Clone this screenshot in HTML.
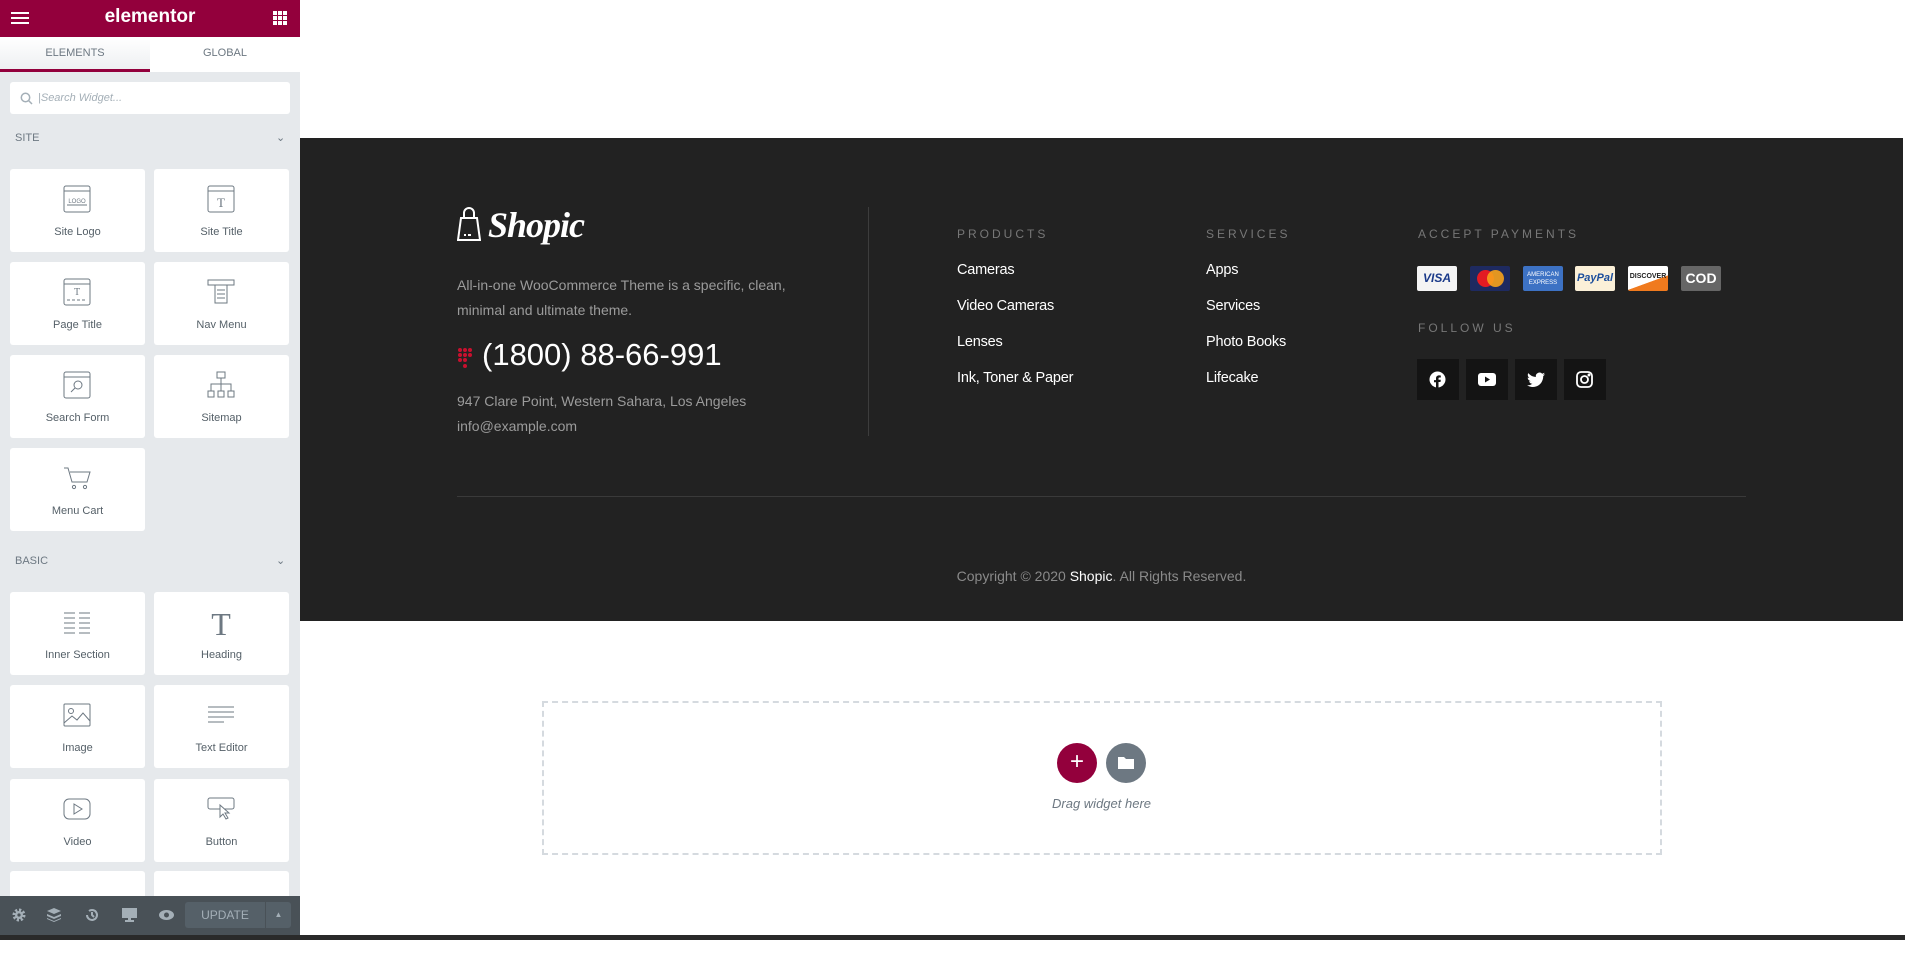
<!DOCTYPE html>
<html><head><meta charset="utf-8"><style>
*{box-sizing:border-box;margin:0;padding:0}
body{width:1905px;height:940px;overflow:hidden;background:#fff;font-family:"Liberation Sans",sans-serif;position:relative}
.abs{position:absolute}
#panel{left:0;top:0;width:300px;height:940px;background:#e6e9ec}
#hdr{left:0;top:0;width:300px;height:37px;background:#93003c;color:#fff}
.tab{top:37px;height:35px;width:150px;font-size:11px;color:#6d7882;text-align:center;line-height:33px;background:#fff}
.tile{width:135px;height:83px;background:#fff;border-radius:3px}
.tile svg{position:absolute;left:53px;top:16px}
.tile span{position:absolute;left:0;right:0;top:57px;text-align:center;font-size:11px;color:#556068}
.sec{font-size:11px;color:#6d7882;left:15px}
.chev{font-size:11px;color:#6d7882;left:276px}
#footer{left:300px;top:138px;width:1603px;height:483px;background:#222}
.h{font-size:12px;letter-spacing:3px;color:#777}
.lk{font-size:14.5px;color:#fff;letter-spacing:-0.2px}
.card{width:40px;height:25px;top:266px;border-radius:2px}
.soc{width:42px;height:41px;top:359px;background:#141414}
.soc svg{position:absolute;left:12px;top:12px}
</style></head><body>
<div id="panel" class="abs">
<div id="hdr" class="abs">
 <div class="abs" style="left:11px;top:12px;width:18px;height:2px;background:#fff;box-shadow:0 5px 0 #fff,0 10px 0 #fff"></div>
 <div class="abs" style="left:0;width:300px;top:6px;text-align:center;font-weight:bold;font-size:19px">elementor</div>
 <svg class="abs" style="left:273px;top:11px" width="14" height="14"><g fill="#fff"><rect x="0" y="0" width="4" height="4"/><rect x="5" y="0" width="4" height="4"/><rect x="10" y="0" width="4" height="4"/><rect x="0" y="5" width="4" height="4"/><rect x="5" y="5" width="4" height="4"/><rect x="10" y="5" width="4" height="4"/><rect x="0" y="10" width="4" height="4"/><rect x="5" y="10" width="4" height="4"/><rect x="10" y="10" width="4" height="4"/></g></svg>
</div>
<div class="abs tab" style="left:0;background:linear-gradient(#fff,#eef0f2);border-bottom:3px solid #93003c">ELEMENTS</div>
<div class="abs tab" style="left:150px">GLOBAL</div>
<div class="abs" style="left:10px;top:82px;width:280px;height:32px;background:#fff;border-radius:3px">
 <svg class="abs" style="left:10px;top:10px" width="13" height="13"><circle cx="5.5" cy="5.5" r="4.2" fill="none" stroke="#a4afb7" stroke-width="1.5"/><line x1="8.5" y1="8.5" x2="12" y2="12" stroke="#a4afb7" stroke-width="1.5"/></svg>
 <div class="abs" style="left:28px;top:10px;font-size:11px;font-style:italic;color:#a4afb7">|Search Widget...</div>
</div>
<div class="abs sec" style="top:132px">SITE</div><div class="abs chev" style="top:131px">&#8964;</div>
<div class="abs tile" style="left:10px;top:169px"><svg width="28" height="28"><rect x="1" y="1" width="26" height="26" rx="2" fill="none" stroke="#6d7882"/><line x1="1" y1="6" x2="27" y2="6" stroke="#6d7882"/><text x="14" y="18" font-size="6" text-anchor="middle" fill="#6d7882" font-family="Liberation Sans">LOGO</text><line x1="4" y1="20" x2="24" y2="20" stroke="#6d7882"/></svg><span>Site Logo</span></div>
<div class="abs tile" style="left:154px;top:169px"><svg width="28" height="28"><rect x="1" y="1" width="26" height="26" rx="2" fill="none" stroke="#6d7882"/><line x1="1" y1="6" x2="27" y2="6" stroke="#6d7882"/><text x="14" y="22" font-size="13" text-anchor="middle" fill="#6d7882" font-family="Liberation Serif">T</text></svg><span>Site Title</span></div>
<div class="abs tile" style="left:10px;top:262px"><svg width="28" height="28"><rect x="1" y="1" width="26" height="26" rx="2" fill="none" stroke="#6d7882"/><line x1="1" y1="6" x2="27" y2="6" stroke="#6d7882"/><text x="14" y="17" font-size="10" text-anchor="middle" fill="#6d7882" font-family="Liberation Serif">T</text><line x1="4" y1="22" x2="24" y2="22" stroke="#6d7882" stroke-dasharray="3 2"/></svg><span>Page Title</span></div>
<div class="abs tile" style="left:154px;top:262px"><svg width="28" height="28"><rect x="1" y="2" width="26" height="5" fill="none" stroke="#6d7882"/><rect x="8" y="7" width="12" height="18" fill="none" stroke="#6d7882"/><line x1="10" y1="12" x2="18" y2="12" stroke="#6d7882"/><line x1="10" y1="16" x2="18" y2="16" stroke="#6d7882"/><line x1="10" y1="20" x2="18" y2="20" stroke="#6d7882"/></svg><span>Nav Menu</span></div>
<div class="abs tile" style="left:10px;top:355px"><svg width="28" height="28"><rect x="1" y="1" width="26" height="26" rx="2" fill="none" stroke="#6d7882"/><line x1="1" y1="6" x2="27" y2="6" stroke="#6d7882"/><circle cx="15" cy="14" r="4" fill="none" stroke="#6d7882"/><line x1="12" y1="17" x2="8" y2="21" stroke="#6d7882"/></svg><span>Search Form</span></div>
<div class="abs tile" style="left:154px;top:355px"><svg width="28" height="28" fill="none" stroke="#6d7882"><rect x="10" y="1" width="8" height="6"/><rect x="1" y="20" width="6" height="6"/><rect x="11" y="20" width="6" height="6"/><rect x="21" y="20" width="6" height="6"/><path d="M14 7v6M4 20v-7h20v7M14 13v7"/></svg><span>Sitemap</span></div>
<div class="abs tile" style="left:10px;top:448px"><svg width="28" height="28" fill="none" stroke="#6d7882"><path d="M1 4h4l4 14h15l3-10H7"/><circle cx="11" cy="23" r="1.6"/><circle cx="22" cy="23" r="1.6"/></svg><span>Menu Cart</span></div>
<div class="abs sec" style="top:555px">BASIC</div><div class="abs chev" style="top:554px">&#8964;</div>
<div class="abs tile" style="left:10px;top:592px"><svg width="28" height="28" stroke="#6d7882"><path d="M1 5h11M16 5h11M1 10h11M16 10h11M1 15h11M16 15h11M1 20h11M16 20h11M1 25h11M16 25h11" stroke-width="1"/></svg><span>Inner Section</span></div>
<div class="abs tile" style="left:154px;top:592px"><svg width="28" height="28"><text x="14" y="27" font-size="32" text-anchor="middle" fill="#6d7882" font-family="Liberation Serif">T</text></svg><span>Heading</span></div>
<div class="abs tile" style="left:10px;top:685px"><svg width="28" height="28" fill="none" stroke="#6d7882"><rect x="1" y="3" width="26" height="22" rx="1"/><circle cx="8" cy="10" r="2.5"/><path d="M1 22l8-7 5 4 6-7 7 8"/></svg><span>Image</span></div>
<div class="abs tile" style="left:154px;top:685px"><svg width="28" height="28" stroke="#6d7882"><path d="M1 6h26M1 11h26M1 16h26M1 21h16"/></svg><span>Text Editor</span></div>
<div class="abs tile" style="left:10px;top:779px"><svg width="28" height="28" fill="none" stroke="#6d7882"><rect x="1" y="4" width="26" height="20" rx="5"/><path d="M11 9v10l8-5z"/></svg><span>Video</span></div>
<div class="abs tile" style="left:154px;top:779px"><svg width="28" height="28" fill="none" stroke="#6d7882"><rect x="1" y="3" width="26" height="11" rx="2"/><path d="M13 10v12l3-3 3 5 2-1-3-5h4z" fill="#fff"/></svg><span>Button</span></div>
<div class="abs tile" style="left:10px;top:871px"></div>
<div class="abs tile" style="left:154px;top:871px"></div>
<div class="abs" style="left:0;top:896px;width:300px;height:39px;background:#495157">
 <svg class="abs" style="left:12px;top:12px" width="14" height="14"><circle cx="7" cy="7" r="5" fill="none" stroke="#a4afb7" stroke-width="3" stroke-dasharray="2.2 1.7"/><circle cx="7" cy="7" r="4" fill="#a4afb7"/><circle cx="7" cy="7" r="1.6" fill="#495157"/></svg>
 <svg class="abs" style="left:47px;top:12px" width="14" height="14" fill="#a4afb7"><path d="M7 0l7 3-7 3-7-3z"/><path d="M0 6l7 3 7-3v2l-7 3-7-3z"/><path d="M0 10l7 3 7-3v1l-7 3-7-3z"/></svg>
 <svg class="abs" style="left:85px;top:12px" width="14" height="14" fill="none" stroke="#a4afb7" stroke-width="2"><path d="M2 7a5 5 0 1 0 2-4M7 4v3l2 2"/></svg>
 <svg class="abs" style="left:122px;top:12px" width="15" height="14" fill="#a4afb7"><rect x="0" y="0" width="15" height="10"/><rect x="6" y="10" width="3" height="2"/><rect x="3" y="12" width="9" height="2"/></svg>
 <svg class="abs" style="left:159px;top:14px" width="15" height="10"><ellipse cx="7.5" cy="5" rx="7.5" ry="5" fill="#a4afb7"/><circle cx="7.5" cy="5" r="2.5" fill="#495157"/></svg>
 <div class="abs" style="left:185px;top:6px;width:80px;height:26px;background:#556068;border-radius:3px 0 0 3px;color:#a4afb7;font-size:12px;text-align:center;line-height:26px">UPDATE</div>
 <div class="abs" style="left:266px;top:6px;width:25px;height:26px;background:#556068;border-radius:0 3px 3px 0;color:#a4afb7;font-size:8px;text-align:center;line-height:26px">&#9650;</div>
</div>
</div>
<div class="abs" style="left:300px;top:443px;width:15px;height:49px;background:#e6e9ec;color:#6d7882;font-size:12px;line-height:49px;text-align:center">&#8249;</div>

<div id="footer" class="abs"></div>
<svg class="abs" style="left:457px;top:207px" width="24" height="35" fill="none" stroke="#fff" stroke-width="2"><path d="M7 10V6a5 5 0 0 1 10 0v4"/><path d="M4 11h16l3 22H1z"/><path d="M7 28h2M11 28h3" stroke-width="2"/></svg>
<div class="abs" style="left:488px;top:204px;font-family:'Liberation Serif',serif;font-style:italic;font-weight:bold;font-size:36px;color:#fff;letter-spacing:-1px">Shopic</div>
<div class="abs" style="left:457px;top:273px;font-size:14px;line-height:25px;color:#9b9b9b;width:400px">All-in-one WooCommerce Theme is a specific, clean,<br>minimal and ultimate theme.</div>
<svg class="abs" style="left:457px;top:347px" width="18" height="22" fill="#c8102e"><circle cx="3" cy="3" r="2"/><circle cx="8" cy="3" r="2"/><circle cx="13" cy="3" r="2"/><circle cx="3" cy="8" r="2"/><circle cx="8" cy="8" r="2"/><circle cx="13" cy="8" r="2"/><circle cx="3" cy="13" r="2"/><circle cx="8" cy="13" r="2"/><circle cx="8" cy="19" r="2"/></svg>
<div class="abs" style="left:482px;top:337px;font-size:31px;color:#fff">(1800) 88-66-991</div>
<div class="abs" style="left:457px;top:389px;font-size:14px;line-height:25px;color:#9b9b9b">947 Clare Point, Western Sahara, Los Angeles<br>info@example.com</div>
<div class="abs" style="left:868px;top:207px;width:1px;height:229px;background:#3d3d3d"></div>
<div class="abs h" style="left:957px;top:227px">PRODUCTS</div>
<div class="abs lk" style="left:957px;top:262px">Cameras</div>
<div class="abs lk" style="left:957px;top:298px">Video Cameras</div>
<div class="abs lk" style="left:957px;top:334px">Lenses</div>
<div class="abs lk" style="left:957px;top:370px">Ink, Toner &amp; Paper</div>
<div class="abs h" style="left:1206px;top:227px">SERVICES</div>
<div class="abs lk" style="left:1206px;top:262px">Apps</div>
<div class="abs lk" style="left:1206px;top:298px">Services</div>
<div class="abs lk" style="left:1206px;top:334px">Photo Books</div>
<div class="abs lk" style="left:1206px;top:370px">Lifecake</div>
<div class="abs h" style="left:1418px;top:227px">ACCEPT PAYMENTS</div>
<div class="abs card" style="left:1417px;background:#f4f4f4;color:#1a3a8a;font:bold italic 12px 'Liberation Sans';text-align:center;line-height:25px">VISA</div>
<div class="abs card" style="left:1470px;background:#1e2a60"><div class="abs" style="left:7px;top:4px;width:17px;height:17px;border-radius:50%;background:#e31b23"></div><div class="abs" style="left:17px;top:4px;width:17px;height:17px;border-radius:50%;background:#f7a21b;opacity:.9"></div></div>
<div class="abs card" style="left:1523px;background:#3d72c4;color:#fff;font-size:6px;text-align:center;line-height:8px;padding-top:5px">AMERICAN<br>EXPRESS</div>
<div class="abs card" style="left:1575px;background:#fbf0d8;color:#1c4e9c;font:bold italic 11px 'Liberation Sans';text-align:center;line-height:25px">PayPal</div>
<div class="abs card" style="left:1628px;background:linear-gradient(160deg,#fff 60%,#f07a1e 61%);color:#222;font:bold 7px 'Liberation Sans';text-align:center;line-height:22px">DISCOVER</div>
<div class="abs card" style="left:1681px;background:#666;color:#fff;font:bold 14px 'Liberation Sans';text-align:center;line-height:25px">COD</div>
<div class="abs h" style="left:1418px;top:321px">FOLLOW US</div>
<div class="abs soc" style="left:1417px"><svg width="17" height="17"><circle cx="8.5" cy="8.5" r="8" fill="#fff"/><path d="M9.5 17v-6h2l.3-2.2H9.5V7.5c0-.6.2-1 1-1h1.3V4.5c-.3 0-1-.1-1.8-.1-1.8 0-3 1.1-3 3.1v1.6H5v2.2h2V17z" fill="#141414"/></svg></div>
<div class="abs soc" style="left:1466px"><svg width="18" height="17"><rect x="0" y="2" width="18" height="13" rx="3" fill="#fff"/><path d="M7 5.5v6l5-3z" fill="#141414"/></svg></div>
<div class="abs soc" style="left:1515px"><svg width="18" height="17"><path d="M18 3.2c-.7.3-1.4.5-2.1.6.8-.5 1.3-1.2 1.6-2-.7.4-1.5.7-2.3.9A3.7 3.7 0 0 0 8.9 6 10.5 10.5 0 0 1 1.3 2.1a3.7 3.7 0 0 0 1.1 4.9c-.6 0-1.2-.2-1.7-.5 0 1.8 1.3 3.3 3 3.6-.5.2-1.1.2-1.7.1.5 1.5 1.8 2.5 3.4 2.6A7.4 7.4 0 0 1 0 14.3 10.5 10.5 0 0 0 5.7 16c6.8 0 10.5-5.6 10.5-10.5v-.5c.7-.5 1.3-1.1 1.8-1.8z" fill="#fff"/></svg></div>
<div class="abs soc" style="left:1564px"><svg width="17" height="17" fill="none" stroke="#fff" stroke-width="1.8"><rect x="1" y="1" width="15" height="15" rx="4"/><circle cx="8.5" cy="8.5" r="3.5"/><circle cx="13" cy="4" r=".6" fill="#fff"/></svg></div>
<div class="abs" style="left:457px;top:496px;width:1289px;height:1px;background:#3a3a3a"></div>
<div class="abs" style="left:457px;top:568px;width:1289px;text-align:center;font-size:14px;color:#8a8a8a">Copyright © 2020 <span style="color:#fff">Shopic</span>. All Rights Reserved.</div>

<div class="abs" style="left:542px;top:701px;width:1120px;height:154px;border:2px dashed #d5dadf"></div>
<div class="abs" style="left:1057px;top:743px;width:40px;height:40px;border-radius:50%;background:#93003c;color:#fff;font-size:24px;text-align:center;line-height:38px">+</div>
<div class="abs" style="left:1106px;top:743px;width:40px;height:40px;border-radius:50%;background:#6d7882"><svg class="abs" style="left:12px;top:13px" width="16" height="13" fill="#fff"><path d="M0 1h6l2 2h8v10H0z"/></svg></div>
<div class="abs" style="left:1000px;top:796px;width:203px;text-align:center;font-size:13px;font-style:italic;color:#6d7882">Drag widget here</div>
<div class="abs" style="left:0;top:935px;width:1905px;height:5px;background:#2a2a2a"></div>
</body></html>
